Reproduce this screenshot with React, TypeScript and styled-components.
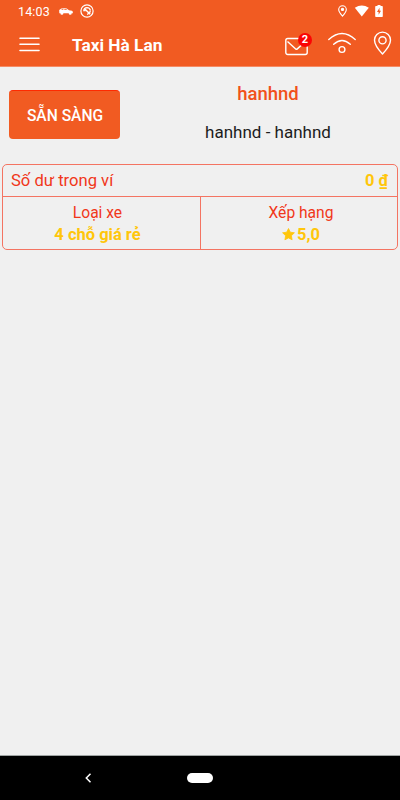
import React from 'react';
import styled, { createGlobalStyle } from 'styled-components';

const GlobalStyle = createGlobalStyle`
  *, *::before, *::after { box-sizing: border-box; }
  body { margin: 0; background: #f0f0f0; font-family: Roboto, sans-serif; }
`;

const ORANGE = '#f15b22';
const AMBER = '#ffc60b';

const Screen = styled.div`
  display: flex;
  flex-direction: column;
  width: 400px;
  height: 800px;
  background: #f0f0f0;
  overflow: hidden;
`;

const StatusBar = styled.header`
  display: flex;
  align-items: center;
  height: 22px;
  padding: 0 17px 0 18px;
  background: ${ORANGE};
  color: #fff;
`;

const Clock = styled.time`
  width: 41px;
  font-size: 12.5px;
  line-height: 22px;
  letter-spacing: 0.15px;
  padding-top: 1px;
`;

const StatusGroup = styled.div<{ $gap: number; $end?: boolean }>`
  display: flex;
  align-items: center;
  gap: ${({ $gap }) => $gap}px;
  margin-left: ${({ $end }) => ($end ? 'auto' : '0')};
  svg { display: block; }
`;

const AppBar = styled.nav`
  display: flex;
  align-items: center;
  height: 45px;
  padding: 0 8px 0 19px;
  background: ${ORANGE};
  border-bottom: 1px solid #f58b65;
  color: #fff;
`;

const IconButton = styled.button<{ $width: number; $left?: number }>`
  position: relative;
  flex: none;
  width: ${({ $width }) => $width}px;
  height: 30px;
  margin: 0 0 0 ${({ $left = 0 }) => $left}px;
  padding: 0;
  border: 0;
  background: none;
  color: inherit;
  svg { display: block; }
`;

const Title = styled.h1`
  flex: 1;
  margin: 0 0 0 32px;
  font-size: 17.3px;
  line-height: 24px;
  font-weight: 700;
  padding-top: 2px;
`;

const Badge = styled.span`
  position: absolute;
  top: 4px;
  right: -4px;
  width: 14px;
  height: 14px;
  border-radius: 50%;
  background: #fb0404;
  font: 700 11px/14px Roboto, sans-serif;
  text-align: center;
`;

const Driver = styled.section`
  display: flex;
  height: 97px;
  padding: 0 0 0 9px;
`;

const ReadyButton = styled.button`
  width: 111px;
  height: 49px;
  margin-top: 23px;
  padding: 2px 0 0 1px;
  border: 0;
  border-top: 1px solid #ff2a00;
  border-radius: 4px;
  background: ${ORANGE};
  color: #fff;
  font: 500 15.6px/20px Roboto, sans-serif;
`;

const DriverInfo = styled.div`
  flex: 1;
  margin-left: 16px;
  text-align: center;
`;

const DriverName = styled.div`
  margin-top: 15px;
  color: #f1511b;
  font-size: 18.5px;
  font-weight: 500;
  line-height: 24px;
`;

const DriverDetail = styled.div`
  margin-top: 15px;
  color: #1c1c1c;
  font-size: 17px;
  line-height: 22px;
`;

const Summary = styled.section`
  flex: none;
  width: 396px;
  height: 86px;
  margin: 0 2px;
  border: 1px solid #f47462;
  border-radius: 5px;
`;

const Balance = styled.div`
  display: flex;
  justify-content: space-between;
  height: 32px;
  padding: 5px 9px 0 8px;
  border-bottom: 1px solid #f47462;
`;

const Stats = styled.div`
  display: grid;
  grid-template-columns: 197px 1fr;
  height: 52px;
`;

const Stat = styled.div`
  display: flex;
  flex-direction: column;
  align-items: center;
  padding: 5px 0 0;
  & + & { border-left: 1px solid #f47462; }
  &:first-child { padding-right: 8px; }
  &:last-child { padding-left: 4px; }
`;

const Label = styled.span<{ $size?: number }>`
  color: #f1371a;
  font-size: ${({ $size = 15.6 }) => $size}px;
  font-weight: 400;
  line-height: 22px;
`;

const Value = styled.strong`
  display: flex;
  align-items: center;
  gap: 2px;
  height: 22px;
  color: ${AMBER};
  font-size: 16.5px;
  font-weight: 700;
  line-height: 22px;
`;

const SystemNav = styled.footer`
  display: flex;
  align-items: center;
  height: 45px;
  margin-top: auto;
  padding-left: 84px;
  background: #000;
  border-top: 1px solid #9fa4a3;
`;

const HomePill = styled.span`
  width: 26px;
  height: 10px;
  margin-left: 95px;
  border-radius: 5px;
  background: #fff;
`;

const CarIcon = () => (
  <svg width="14" height="7" viewBox="0 0 14 7" fill="#fff">
    <path d="M.2 2 2.3.6Q5 0 7.7.4L10 2.2l3 .6q1 .4.9 2.4h-1.2a1.5 1.5 0 0 1-3 0H4.4a1.5 1.5 0 0 1-3 0H.3Z" />
    <path d="M3 1.3h1.4v.8H2.2ZM5.3 1.2h1.9l1.1.9h-3Z" fill={ORANGE} />
  </svg>
);

const BlockedIcon = () => (
  <svg width="14" height="14" viewBox="0 0 14 14" fill="none" stroke="#fff">
    <circle cx="7" cy="7" r="6.1" strokeWidth="1.2" />
    <path d="M3.8 7.2Q3.7 3.8 7 3.600q2.900.1 3.400 2.800M3.700 6.500h2.100M10.300 6.800Q10 9.800 7 10.300" strokeWidth="1.300" />
    <path d="m4.600 4.700 5.600 5.600" strokeWidth="1.500" />
  </svg>
);

const PinIcon = () => (
  <svg width="19" height="30" viewBox="0 0 19 30" fill="none" stroke="#fff" strokeWidth="1.400" strokeLinejoin="round">
    <path d="M9.500 25Q1.500 16.500 1.500 11a8 7.900 0 0 1 16 0Q17.500 16.500 9.500 25Z" />
    <circle cx="9.500" cy="11.300" r="3.600" />
  </svg>
);

const App = () => (
  <>
    <GlobalStyle />
    <Screen>
      <StatusBar>
        <Clock>14:03</Clock>
        <StatusGroup $gap={7}>
          <CarIcon />
          <BlockedIcon />
        </StatusGroup>
        <StatusGroup $gap={6} $end>
          <svg width="10" height="12" viewBox="0 0 10 12" fill="none" stroke="#fff" strokeWidth="1.1">
            <path d="M4.500 11.100Q.7 7 .7 4.500a3.800 3.800 0 0 1 7.600 0q0 2.500-3.800 6.600Z" />
            <circle cx="4.500" cy="4.400" r="1.100" fill="#fff" />
          </svg>
          <svg width="15" height="12" viewBox="0 0 15 12" fill="#fff">
            <path d="M.8 2.800Q7.800-2 14.800 2.800L7.800 11.600Z" />
          </svg>
          <svg width="8" height="12" viewBox="0 0 8 12" fill="#fff">
            <path d="M2.500 0h3v1H7q.8 0 .8.8v9.400q0 .8-.8.8H1q-.8 0-.8-.8V1.800Q.2 1 1 1h1.500Z" />
            <path d="M4.500 2.800 2 7h1.600v2.800L6 5.700H4.500Z" fill={ORANGE} />
          </svg>
        </StatusGroup>
      </StatusBar>
      <AppBar>
        <IconButton $width={21} aria-label="Menu">
          <svg width="21" height="30" viewBox="0 0 21 30" stroke="#fff" strokeWidth="1.600" strokeLinecap="round">
            <path d="M1 9.300h19M1 15.200h19M1 21.500h19" />
          </svg>
        </IconButton>
        <Title>Taxi Hà Lan</Title>
        <IconButton $width={23} aria-label="Messages">
          <svg width="23" height="30" viewBox="0 0 23 30" fill="none" stroke="#fff" strokeWidth="1.400" strokeLinejoin="round">
            <rect x=".8" y="9.500" width="21.400" height="16" rx="2" />
            <path d="m2.500 12.500 8.200 7.400q.8.700 1.600 0l8.200-7.400" />
          </svg>
          <Badge>2</Badge>
        </IconButton>
        <IconButton $width={28} $left={20} aria-label="Connection">
          <svg width="28" height="30" viewBox="0 0 28 30" fill="none" stroke="#fff" strokeWidth="1.400" strokeLinecap="round">
            <path d="M.8 10.600Q14-1.400 27.200 10.600M5.700 15.200q8.300-7.500 16.600 0" />
            <circle cx="14" cy="20.500" r="2.900" />
          </svg>
        </IconButton>
        <IconButton $width={19} $left={17} aria-label="Location">
          <PinIcon />
        </IconButton>
      </AppBar>
      <Driver>
        <ReadyButton>SẴN SÀNG</ReadyButton>
        <DriverInfo>
          <DriverName>hanhnd</DriverName>
          <DriverDetail>hanhnd - hanhnd</DriverDetail>
        </DriverInfo>
      </Driver>
      <Summary>
        <Balance>
          <Label $size={16.6}>Số dư trong ví</Label>
          <Value>0 ₫</Value>
        </Balance>
        <Stats>
          <Stat>
            <Label>Loại xe</Label>
            <Value>4 chỗ giá rẻ</Value>
          </Stat>
          <Stat>
            <Label>Xếp hạng</Label>
            <Value>
              <svg width="13" height="14" viewBox="0 0 13 14" fill={AMBER} stroke={AMBER} strokeWidth=".8" strokeLinejoin="round">
                <path d="m6.500.5 1.800 3.700 4.100.6-3 2.900.7 4.100-3.600-1.900-3.600 1.900.7-4.100-3-2.900 4.100-.6Z" />
              </svg>
              5,0
            </Value>
          </Stat>
        </Stats>
      </Summary>
      <SystemNav>
        <svg width="8" height="12" viewBox="0 0 8 12" fill="none" stroke="#fff" strokeWidth="1.500">
          <path d="M6.500 1.800 2.300 6l4.200 4.200" />
        </svg>
        <HomePill />
      </SystemNav>
    </Screen>
  </>
);

export default App;
